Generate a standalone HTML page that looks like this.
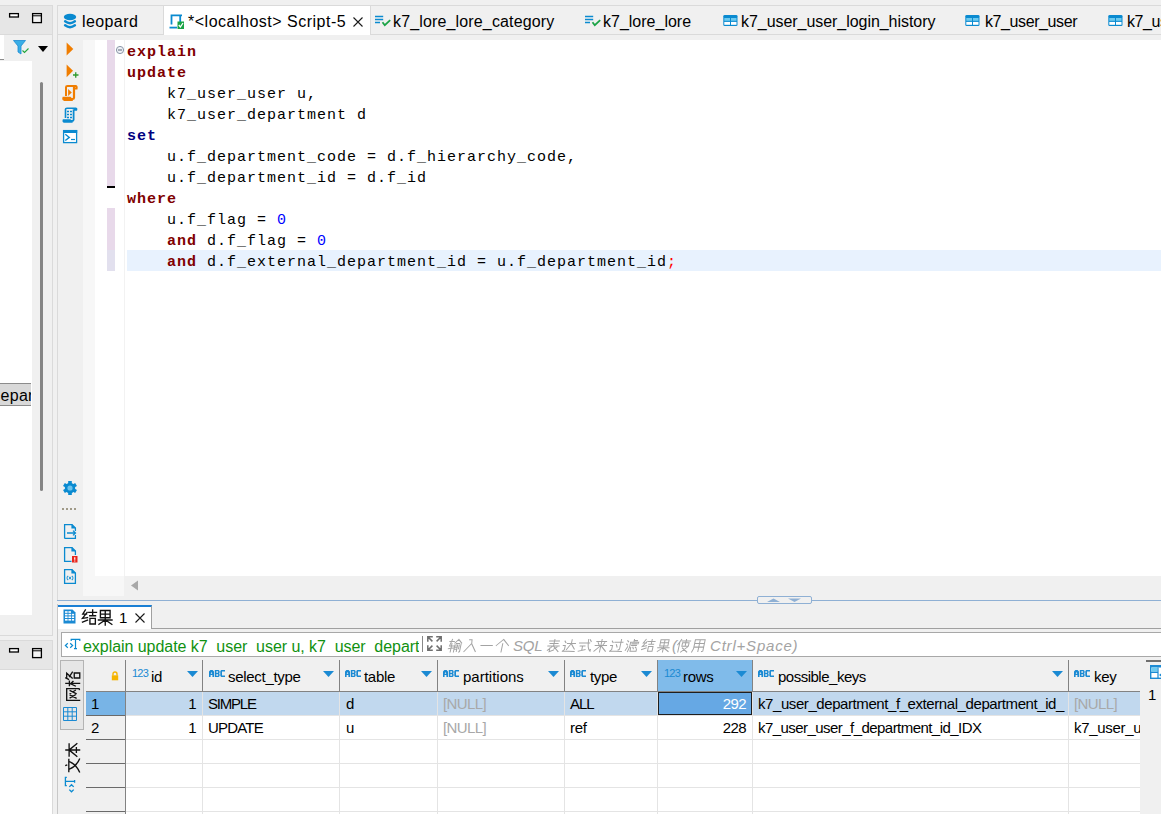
<!DOCTYPE html>
<html><head><meta charset="utf-8">
<style>
*{margin:0;padding:0;box-sizing:border-box}
html,body{width:1161px;height:814px;overflow:hidden;background:#f0f0f0;font-family:"Liberation Sans",sans-serif;position:relative}
.a{position:absolute}
.ui{font-family:"Liberation Sans",sans-serif;font-size:16px;color:#000;white-space:nowrap}
.code{font-family:"Liberation Mono",monospace;font-size:15px;letter-spacing:1px;white-space:pre;color:#000}
.kw{color:#800000;font-weight:bold}
.kn{color:#000080;font-weight:bold}
.num{color:#0000ff}
</style></head><body>

<!-- ===== LEFT PANEL (upper) ===== -->
<div class="a" style="left:0;top:5px;width:53px;height:631px;background:#f0f0f0;border-right:1px solid #dadada;border-top:1px solid #dadada;border-bottom:1px solid #dadada"></div>
<div class="a" style="left:0;top:6px;width:52px;height:29px;background:#e6e6e6;border-bottom:1px solid #dadada"></div>
<!-- min/max icons -->
<svg class="a" style="left:8px;top:12px" width="36" height="13" viewBox="0 0 36 13"><rect x="1.6" y="1.6" width="8.8" height="3.4" fill="#fff" stroke="#000" stroke-width="1.3"/><rect x="24.6" y="1.6" width="8.8" height="9" fill="#f4f4f4" stroke="#000" stroke-width="1.3"/><path d="M24.6 3.8H33.4" stroke="#000" stroke-width="1"/></svg>
<!-- filter row -->
<div class="a" style="left:0;top:35px;width:4px;height:25px;background:#fff;border-bottom:1px solid #8c8c8c"></div>
<!-- tree -->
<div class="a" style="left:0;top:61px;width:32px;height:554px;background:#fff"></div>
<div class="a" style="left:40px;top:82px;width:3px;height:409px;background:#858585;border-radius:2px"></div>

<!-- left panel extras -->
<svg class="a" style="left:13px;top:40px" width="18" height="16" viewBox="0 0 18 16"><path d="M0.5 0.5H12.5L8 6V14L5 12V6Z" fill="#3aaee6" stroke="#1b8ad3" stroke-width="0.8"/><path d="M9.5 10.5L11.5 12.5L15.5 8.5" stroke="#22a63c" stroke-width="1.1" fill="none"/></svg>
<svg class="a" style="left:38px;top:46px" width="10" height="6" viewBox="0 0 10 6"><path d="M0 0H10L5 6Z" fill="#000"/></svg>
<div class="a" style="left:0;top:383px;width:31px;height:23px;background:#d9d9d9;border-top:1px solid #8c8c8c;border-bottom:1px solid #8c8c8c"></div>
<div class="a" style="left:0;top:384px;width:31px;height:21px;overflow:hidden"><div class="a ui" style="left:0.5px;top:2px;font-size:16px;line-height:20px;letter-spacing:0.3px">epar</div></div>
<div class="a" style="left:0;top:615px;width:52px;height:20px;background:#f0f0f0"></div>
<div class="a" style="left:50px;top:670px;width:1px;height:27px;background:#c8c8c8"></div>

<!-- ===== LEFT PANEL (lower) ===== -->
<div class="a" style="left:0;top:640px;width:53px;height:174px;background:#fff;border-right:1px solid #dadada;border-top:1px solid #dadada"></div>
<div class="a" style="left:0;top:641px;width:52px;height:29px;background:#e6e6e6;border-bottom:1px solid #dadada"></div>
<svg class="a" style="left:8px;top:647px" width="36" height="13" viewBox="0 0 36 13"><rect x="1.6" y="1.6" width="8.8" height="3.4" fill="#fff" stroke="#000" stroke-width="1.3"/><rect x="24.6" y="1.6" width="8.8" height="9" fill="#f4f4f4" stroke="#000" stroke-width="1.3"/><path d="M24.6 3.8H33.4" stroke="#000" stroke-width="1"/></svg>

<!-- ===== EDITOR ===== -->
<div class="a" style="left:57px;top:5px;width:1104px;height:30px;background:#f0f0f0;border-top:1px solid #dadada;border-left:1px solid #dadada;border-bottom:1px solid #dadada"></div>
<div class="a" style="left:164px;top:6px;width:207px;height:29px;background:#fff"></div>
<div class="a" style="left:163px;top:6px;width:1px;height:29px;background:#dadada"></div>
<div class="a" style="left:370px;top:6px;width:1px;height:29px;background:#dadada"></div>


<!-- tab icons/text -->
<svg class="a" style="left:63px;top:13px" width="14" height="16" viewBox="0 0 14 16">
 <ellipse cx="7" cy="4" rx="6.2" ry="3.3" fill="#0a8ad0"/>
 <path d="M2.1 8.3 Q7 12 11.9 8.3" stroke="#0a8ad0" stroke-width="2.4" stroke-linecap="round" fill="none"/>
 <path d="M2.1 12.3 Q7 16 11.9 12.3" stroke="#0a8ad0" stroke-width="2.4" stroke-linecap="round" fill="none"/>
</svg>
<div class="a ui" style="left:82px;top:12px;line-height:20px;letter-spacing:0.4px">leopard</div>
<svg class="a" style="left:169px;top:14px" width="16" height="16" viewBox="0 0 16 16">
 <path d="M2.5 10.5 V1.3 H13" stroke="#0a8ad0" stroke-width="1.8" fill="none"/>
 <path d="M11.2 1.3 V9" stroke="#0a8ad0" stroke-width="1.8" fill="none"/>
 <path d="M0.5 13.6 H8" stroke="#0a8ad0" stroke-width="1.8" fill="none"/>
 <rect x="8.5" y="7.5" width="6.5" height="7.5" fill="#1aa346"/>
 <path d="M9.8 11 L11.4 13 L14 9" stroke="#fff" stroke-width="1.3" fill="none"/>
</svg>
<div class="a ui" style="left:188px;top:12px;line-height:20px;letter-spacing:0.5px">*&lt;localhost&gt; Script-5</div>
<svg class="a" style="left:353px;top:17px" width="10" height="10" viewBox="0 0 10 10"><path d="M0.5 0.5 L9.5 9.5 M9.5 0.5 L0.5 9.5" stroke="#1a1a1a" stroke-width="1.1"/></svg>
<svg class="a" style="left:375px;top:15px" width="17" height="12" viewBox="0 0 17 12">
 <path d="M0 1.5H8.2M0 4.5H8.2M0 7.5H5" stroke="#0a8ad0" stroke-width="1.5"/>
 <path d="M7.5 7.2 L9.8 10.2 L15.2 5.2" stroke="#1aa346" stroke-width="1.8" fill="none"/>
</svg>
<div class="a ui" style="left:393px;top:12px;line-height:20px;letter-spacing:0.15px">k7_lore_lore_category</div>
<svg class="a" style="left:585px;top:15px" width="17" height="12" viewBox="0 0 17 12">
 <path d="M0 1.5H8.2M0 4.5H8.2M0 7.5H5" stroke="#0a8ad0" stroke-width="1.5"/>
 <path d="M7.5 7.2 L9.8 10.2 L15.2 5.2" stroke="#1aa346" stroke-width="1.8" fill="none"/>
</svg>
<div class="a ui" style="left:603px;top:12px;line-height:20px">k7_lore_lore</div>
<svg class="a" style="left:723px;top:15px" width="15" height="11" viewBox="0 0 15 11">
 <rect x="0.3" y="0" width="14.2" height="11" rx="1.3" fill="#0a8ad0"/>
 <rect x="1.3" y="3" width="5.7" height="2.8" fill="#6ccaef"/>
 <rect x="8" y="3" width="5.5" height="2.8" fill="#6ccaef"/>
 <rect x="1.3" y="6.9" width="5.7" height="2.9" fill="#fff"/>
 <rect x="8" y="6.9" width="5.5" height="2.9" fill="#fff"/>
</svg>
<div class="a ui" style="left:741px;top:12px;line-height:20px;letter-spacing:-0.05px">k7_user_user_login_history</div>
<svg class="a" style="left:965px;top:15px" width="15" height="11" viewBox="0 0 15 11">
 <rect x="0.3" y="0" width="14.2" height="11" rx="1.3" fill="#0a8ad0"/>
 <rect x="1.3" y="3" width="5.7" height="2.8" fill="#6ccaef"/>
 <rect x="8" y="3" width="5.5" height="2.8" fill="#6ccaef"/>
 <rect x="1.3" y="6.9" width="5.7" height="2.9" fill="#fff"/>
 <rect x="8" y="6.9" width="5.5" height="2.9" fill="#fff"/>
</svg>
<div class="a ui" style="left:985px;top:12px;line-height:20px;letter-spacing:-0.4px">k7_user_user</div>
<svg class="a" style="left:1108px;top:15px" width="15" height="11" viewBox="0 0 15 11">
 <rect x="0.3" y="0" width="14.2" height="11" rx="1.3" fill="#0a8ad0"/>
 <rect x="1.3" y="3" width="5.7" height="2.8" fill="#6ccaef"/>
 <rect x="8" y="3" width="5.5" height="2.8" fill="#6ccaef"/>
 <rect x="1.3" y="6.9" width="5.7" height="2.9" fill="#fff"/>
 <rect x="8" y="6.9" width="5.5" height="2.9" fill="#fff"/>
</svg>
<div class="a ui" style="left:1127px;top:12px;line-height:20px;letter-spacing:-0.4px">k7_user_user</div>

<!-- editor body -->
<div class="a" style="left:57px;top:35px;width:1104px;height:565px;background:#f0f0f0;border-left:1px solid #dadada"></div>
<div class="a" style="left:83px;top:40px;width:12px;height:556px;background:#f7f7f7"></div>
<div class="a" style="left:95px;top:40px;width:1066px;height:536px;background:#fff"></div>
<div class="a" style="left:107px;top:40px;width:8px;height:146px;background:#e8d9ea"></div>
<div class="a" style="left:107px;top:186px;width:8px;height:2px;background:#000"></div>
<div class="a" style="left:107px;top:208px;width:8px;height:42px;background:#e8d9ea"></div>
<div class="a" style="left:107px;top:250px;width:8px;height:21px;background:#e2e0ee"></div>
<div class="a" style="left:124px;top:40px;width:1px;height:536px;background:#f2f2f2"></div>
<div class="a" style="left:127px;top:250px;width:1034px;height:21px;background:#e8f2fe"></div>

<div class="a code" style="left:127px;top:42px;line-height:21px"><span class="kw">explain</span>
<span class="kw">update</span>
    k7_user_user u,
    k7_user_department d
<span class="kn">set</span>
    u.f_department_code = d.f_hierarchy_code,
    u.f_department_id = d.f_id
<span class="kw">where</span>
    u.f_flag = <span class="num">0</span>
    <span class="kw">and</span> d.f_flag = <span class="num">0</span>
    <span class="kw">and</span> d.f_external_department_id = u.f_department_id<span style="color:#f00">;</span></div>


<!-- toolbar icons -->
<svg class="a" style="left:60px;top:38px" width="22" height="22" viewBox="0 0 22 22"><path d="M6.6 4.6 L13.3 11 L6.6 17.4Z" fill="#f07d00"/></svg>
<svg class="a" style="left:60px;top:60px" width="22" height="22" viewBox="0 0 22 22"><path d="M6.6 4.4 L13 10.8 L6.6 17.2Z" fill="#f07d00"/><path d="M13 15H18.5M15.75 12.2V17.8" stroke="#2e9a2e" stroke-width="1.3"/></svg>
<svg class="a" style="left:60px;top:82px" width="22" height="22" viewBox="0 0 22 22">
 <path d="M6 14 V5.2 Q6 4 7.5 4 H15.8 Q17 4.3 16.6 6.5 H14.8" stroke="#f07d00" stroke-width="2" fill="none"/>
 <path d="M14 5 V15.8 Q14 17 12.5 17 L11.2 17 L10 15.8 H3.5 Q3 17.3 4.3 17.8 H12.8" stroke="#f07d00" stroke-width="2.2" fill="none"/>
 <path d="M8.1 7 L11.8 10.5 L8.1 14Z" fill="#f07d00"/>
</svg>
<svg class="a" style="left:60px;top:104px" width="22" height="22" viewBox="0 0 22 22">
 <path d="M5.5 14 V5.2 Q5.5 4.2 7 4.2 H15.8 Q17 4.5 16.4 5.9 H14" stroke="#0a8ad0" stroke-width="1.6" fill="none"/>
 <path d="M13.6 5.2 V15.8 Q13.6 17 12.3 17 L11 17 L10 16.2 H3.5 Q3 17.6 4.3 17.8 H12.6" stroke="#0a8ad0" stroke-width="1.8" fill="none"/>
 <path d="M7 7.5H9M10 7.5H12M7 10.5H9M10 10.5H12M7 13.5H9M10 13.5H12" stroke="#0a8ad0" stroke-width="1.4"/>
</svg>
<svg class="a" style="left:60px;top:126px" width="22" height="22" viewBox="0 0 22 22">
 <rect x="3.6" y="4.6" width="13" height="12" stroke="#0a8ad0" stroke-width="1.3" fill="#fff"/>
 <rect x="3" y="4" width="14.2" height="3" fill="#0a8ad0"/>
 <path d="M5.3 8.2 L9.3 11.4 L5.3 14.5" stroke="#0a8ad0" stroke-width="1.4" fill="none"/>
 <path d="M11 13.5H15" stroke="#0a8ad0" stroke-width="1.2"/>
</svg>
<svg class="a" style="left:62px;top:480px" width="16" height="16" viewBox="0 0 16 16">
 <g fill="#0a8ad0" transform="translate(8 8)">
  <circle r="5.2"/>
  <rect x="-1.8" y="-7" width="3.6" height="14"/>
  <rect x="-1.8" y="-7" width="3.6" height="14" transform="rotate(60)"/>
  <rect x="-1.8" y="-7" width="3.6" height="14" transform="rotate(120)"/>
 </g>
 <circle cx="8" cy="8" r="2.6" fill="#6cc3ec"/>
</svg>
<div class="a" style="left:62px;top:508px;width:16px;height:2px;background:repeating-linear-gradient(90deg,#a09a88 0 2px,transparent 2px 4px)"></div>
<svg class="a" style="left:62px;top:522px" width="16" height="18" viewBox="0 0 16 18">
 <path d="M2.6 16.4 V2.6 H10 L13.4 6 V9 M13.4 13 V16.4 H2.6" stroke="#0a8ad0" stroke-width="1.3" fill="none"/>
 <path d="M10 2.6 V6 H13.4" stroke="#0a8ad0" stroke-width="1.2" fill="#0a8ad0"/>
 <path d="M5 11 H13.5 M11 8.6 L13.5 11 L11 13.4" stroke="#0a8ad0" stroke-width="1.3" fill="none"/>
</svg>
<svg class="a" style="left:62px;top:545px" width="16" height="18" viewBox="0 0 16 18">
 <path d="M9.5 16.4 H2.6 V2.6 H10 L13.4 6 V10" stroke="#0a8ad0" stroke-width="1.3" fill="none"/>
 <path d="M10 2.6 V6 H13.4" stroke="#0a8ad0" stroke-width="1.2" fill="#0a8ad0"/>
 <rect x="10" y="11" width="5.5" height="6.5" fill="#e8261b"/>
 <path d="M12.75 12.2V14.8M12.75 15.6V16.6" stroke="#fff" stroke-width="1.2"/>
</svg>
<svg class="a" style="left:62px;top:567px" width="16" height="18" viewBox="0 0 16 18">
 <path d="M2.6 16.4 V2.6 H10 L13.4 6 V16.4 Z" stroke="#0a8ad0" stroke-width="1.3" fill="none"/>
 <path d="M10 2.6 V6 H13.4" stroke="#0a8ad0" stroke-width="1.2" fill="#0a8ad0"/>
 <path d="M5.6 8.8 Q4.4 11 5.6 13.2 M10.4 8.8 Q11.6 11 10.4 13.2 M6.8 9.5 L9.2 12.5 M9.2 9.5 L6.8 12.5" stroke="#0a8ad0" stroke-width="0.9" fill="none"/>
</svg>
<!-- fold icon -->
<svg class="a" style="left:115px;top:45px" width="10" height="10" viewBox="0 0 10 10"><circle cx="5" cy="5" r="3.6" fill="#eef1f6" stroke="#8a96a8" stroke-width="1"/><path d="M3 5H7" stroke="#5a6678" stroke-width="1"/></svg>

<!-- h scrollbar -->
<div class="a" style="left:95px;top:576px;width:29px;height:20px;background:#f7f7f7"></div>
<div class="a" style="left:124px;top:576px;width:1037px;height:20px;background:#f0f0f0"></div>

<!-- sash -->
<div class="a" style="left:57px;top:600px;width:1104px;height:1px;background:#8fb0d4"></div>

<!-- ===== RESULTS ===== -->
<div class="a" style="left:57px;top:604px;width:1104px;height:210px;background:#f0f0f0"></div>
<div class="a" style="left:58px;top:605px;width:94px;height:24px;background:#fff;border-top:2px solid #1a7fd4;border-right:1px solid #a0a0a0"></div>
<div class="a" style="left:152px;top:628px;width:1009px;height:1px;background:#a0a0a0"></div>
<div class="a" style="left:61px;top:632px;width:1100px;height:25px;background:#fff;border:1px solid #a8a8a8;border-right:none"></div>

<!-- results tab content -->
<svg class="a" style="left:63px;top:609px" width="13" height="15" viewBox="0 0 13 15">
 <path d="M0.5 0.5H9.5L12.5 3.5V14.5H0.5Z" fill="#1b8ad3"/>
 <g fill="#fff"><rect x="2" y="2.2" width="2.6" height="1.6"/><rect x="5.4" y="2.2" width="2.6" height="1.6"/>
 <rect x="2" y="4.8" width="2.6" height="1.6"/><rect x="5.4" y="4.8" width="2.6" height="1.6"/><rect x="8.8" y="4.8" width="2.3" height="1.6"/>
 <rect x="2" y="7.4" width="2.6" height="1.6"/><rect x="5.4" y="7.4" width="2.6" height="1.6"/><rect x="8.8" y="7.4" width="2.3" height="1.6"/>
 <rect x="2" y="10" width="2.6" height="1.6"/><rect x="5.4" y="10" width="2.6" height="1.6"/><rect x="8.8" y="10" width="2.3" height="1.6"/>
 </g>
</svg>

<div class="a ui" style="left:119px;top:609px;font-size:15px;line-height:18px">1</div>
<svg class="a" style="left:135px;top:613px" width="10" height="10" viewBox="0 0 10 10"><path d="M0.5 0.5 L9.5 9.5 M9.5 0.5 L0.5 9.5" stroke="#1a1a1a" stroke-width="1.1"/></svg>
<!-- filter bar content -->
<svg class="a" style="left:64px;top:638px" width="18" height="13" viewBox="0 0 18 13"><path d="M3.8 5.3L1.4 7.5L3.8 9.7 M6.2 5.3L8.6 7.5L6.2 9.7 M7.2 3V1.3H15.8V3 M11.5 1.3V10.7 M10 10.7H13" stroke="#0a8ad0" stroke-width="1.2" fill="none"/></svg>
<div class="a" style="left:83px;top:636px;width:336px;height:20px;overflow:hidden"><div class="a ui" style="left:0;top:1px;font-size:16px;line-height:20px;color:#119111;letter-spacing:-0.05px">explain update k7&nbsp; user&nbsp; user u, k7&nbsp; user&nbsp; department d</div></div>
<div class="a" style="left:422px;top:636px;width:1px;height:16px;background:#888"></div>
<svg class="a" style="left:426px;top:635px" width="17" height="17" viewBox="0 0 17 17"><path d="M1.8 6.8V1.8H6.8 M1.8 1.8L6.4 6.4 M15.2 6.8V1.8H10.2 M15.2 1.8L10.6 6.4 M1.8 10.2V15.2H6.8 M1.8 15.2L6.4 10.6 M15.2 10.2V15.2H10.2 M15.2 15.2L10.6 10.6" stroke="#6e6e6e" stroke-width="1.5" fill="none"/></svg>
<div class="a" style="left:513px;top:636px;font:italic 15px/20px 'Liberation Sans',sans-serif;color:#a3a3a3;letter-spacing:-0.2px">SQL</div>
<div class="a" style="left:672px;top:636px;font:italic 15px/20px 'Liberation Sans',sans-serif;color:#a3a3a3">(</div>
<div class="a" style="left:710px;top:636px;font:italic 15px/20px 'Liberation Sans',sans-serif;color:#a3a3a3;letter-spacing:0.8px">Ctrl+Space)</div>
<!-- scrollbar arrow + sash handle -->
<svg class="a" style="left:130px;top:580px" width="9" height="11" viewBox="0 0 9 11"><path d="M8 0.5V10.5L1 5.5Z" fill="#a8a8a8"/></svg>
<div class="a" style="left:757px;top:596px;width:55px;height:8px;background:#f0f0f0;border:1px solid #8fb0d4;border-radius:2px"></div>
<svg class="a" style="left:766px;top:597px" width="36" height="6" viewBox="0 0 36 6"><path d="M1 5H14L7.5 1.5Z M22 1.5H35L28.5 5Z" fill="#8fb0d4"/></svg>
<!-- grid -->
<div class="a" style="left:57px;top:604px;width:1px;height:210px;background:#c8c8c8"></div>
<div class="a" style="left:86px;top:660px;width:1054px;height:154px;background:#fff"></div>
<div class="a" style="left:86px;top:660px;width:1054px;height:32px;background:#f0f0f0;border-bottom:1px solid #828282"></div>
<div class="a" style="left:657px;top:660px;width:95px;height:31px;background:#80bbea"></div>
<!-- row 1 selection -->
<div class="a" style="left:86px;top:692px;width:39px;height:23px;background:#78b4e6"></div>
<div class="a" style="left:126px;top:692px;width:1014px;height:23px;background:#c1d8ee"></div>
<div class="a" style="left:86px;top:715px;width:39px;height:99px;background:#f0f0f0"></div>
<div class="a" style="left:658px;top:692px;width:94px;height:23px;background:#66a8e4;border:1.5px solid #1e1e1e"></div>
<div class="a" style="left:125px;top:660px;width:1px;height:31px;background:#828282"></div>
<div class="a" style="left:202px;top:660px;width:1px;height:31px;background:#828282"></div>
<div class="a" style="left:339px;top:660px;width:1px;height:31px;background:#828282"></div>
<div class="a" style="left:437px;top:660px;width:1px;height:31px;background:#828282"></div>
<div class="a" style="left:564px;top:660px;width:1px;height:31px;background:#828282"></div>
<div class="a" style="left:657px;top:660px;width:1px;height:31px;background:#828282"></div>
<div class="a" style="left:752px;top:660px;width:1px;height:31px;background:#828282"></div>
<div class="a" style="left:1068px;top:660px;width:1px;height:31px;background:#828282"></div>
<div class="a" style="left:202px;top:692px;width:1px;height:122px;background:#e4e4e4"></div>
<div class="a" style="left:339px;top:692px;width:1px;height:122px;background:#e4e4e4"></div>
<div class="a" style="left:437px;top:692px;width:1px;height:122px;background:#e4e4e4"></div>
<div class="a" style="left:564px;top:692px;width:1px;height:122px;background:#e4e4e4"></div>
<div class="a" style="left:657px;top:692px;width:1px;height:122px;background:#e4e4e4"></div>
<div class="a" style="left:752px;top:692px;width:1px;height:122px;background:#e4e4e4"></div>
<div class="a" style="left:1068px;top:692px;width:1px;height:122px;background:#e4e4e4"></div>
<div class="a" style="left:125px;top:692px;width:1px;height:122px;background:#828282"></div>
<div class="a" style="left:126px;top:715px;width:1014px;height:1px;background:#e4e4e4"></div>
<div class="a" style="left:126px;top:739px;width:1014px;height:1px;background:#e4e4e4"></div>
<div class="a" style="left:126px;top:763px;width:1014px;height:1px;background:#e4e4e4"></div>
<div class="a" style="left:126px;top:787px;width:1014px;height:1px;background:#e4e4e4"></div>
<div class="a" style="left:126px;top:811px;width:1014px;height:1px;background:#e4e4e4"></div>
<div class="a" style="left:86px;top:715px;width:39px;height:1px;background:#6a6a6a"></div>
<div class="a" style="left:86px;top:739px;width:39px;height:1px;background:#6a6a6a"></div>
<div class="a" style="left:86px;top:763px;width:39px;height:1px;background:#6a6a6a"></div>
<div class="a" style="left:86px;top:787px;width:39px;height:1px;background:#6a6a6a"></div>
<div class="a" style="left:86px;top:811px;width:39px;height:1px;background:#6a6a6a"></div>
<svg class="a" style="left:111px;top:671px" width="8" height="10" viewBox="0 0 8 10"><path d="M2 4.5V3Q2 1 4 1Q6 1 6 3V4.5" stroke="#f5b400" stroke-width="1.4" fill="none"/><rect x="0.8" y="4.3" width="6.4" height="5" fill="#f5b400"/></svg>
<div class="a" style="left:132px;top:668px;font:11px/11px 'Liberation Sans',sans-serif;color:#1b8ad3;letter-spacing:-0.75px">123</div>
<div class="a ui" style="left:151px;top:668px;font-size:15px;line-height:18px;letter-spacing:-0.3px">id</div>
<svg class="a" style="left:187px;top:671px" width="11" height="6" viewBox="0 0 11 6"><path d="M0 0H11L5.5 6Z" fill="#1b8ad3"/></svg>
<svg class="a" style="left:209px;top:670px" width="16" height="7" viewBox="0 0 16 7"><path fill="#1b8ad3" fill-rule="evenodd" d="M0 7V1.6L1.4 0H3.6L5 1.6V7H3.4V5H1.6V7Z M1.7 3.7L2.5 1.9L3.3 3.7Z M5.8 0H9.6L10.6 1V2.8L10.1 3.5L10.6 4.2V6L9.6 7H5.8Z M7.3 1.3V2.8H9.1V1.3Z M7.3 4.2V5.7H9.1V4.2Z M12.3 0H16V1.6H13V5.4H16V7H12.3L11.3 6V1Z"/></svg>
<div class="a ui" style="left:228px;top:668px;font-size:15px;line-height:18px;letter-spacing:-0.3px">select_type</div>
<svg class="a" style="left:323px;top:671px" width="11" height="6" viewBox="0 0 11 6"><path d="M0 0H11L5.5 6Z" fill="#1b8ad3"/></svg>
<svg class="a" style="left:345px;top:670px" width="16" height="7" viewBox="0 0 16 7"><path fill="#1b8ad3" fill-rule="evenodd" d="M0 7V1.6L1.4 0H3.6L5 1.6V7H3.4V5H1.6V7Z M1.7 3.7L2.5 1.9L3.3 3.7Z M5.8 0H9.6L10.6 1V2.8L10.1 3.5L10.6 4.2V6L9.6 7H5.8Z M7.3 1.3V2.8H9.1V1.3Z M7.3 4.2V5.7H9.1V4.2Z M12.3 0H16V1.6H13V5.4H16V7H12.3L11.3 6V1Z"/></svg>
<div class="a ui" style="left:364px;top:668px;font-size:15px;line-height:18px;letter-spacing:-0.3px">table</div>
<svg class="a" style="left:421px;top:671px" width="11" height="6" viewBox="0 0 11 6"><path d="M0 0H11L5.5 6Z" fill="#1b8ad3"/></svg>
<svg class="a" style="left:443px;top:670px" width="16" height="7" viewBox="0 0 16 7"><path fill="#1b8ad3" fill-rule="evenodd" d="M0 7V1.6L1.4 0H3.6L5 1.6V7H3.4V5H1.6V7Z M1.7 3.7L2.5 1.9L3.3 3.7Z M5.8 0H9.6L10.6 1V2.8L10.1 3.5L10.6 4.2V6L9.6 7H5.8Z M7.3 1.3V2.8H9.1V1.3Z M7.3 4.2V5.7H9.1V4.2Z M12.3 0H16V1.6H13V5.4H16V7H12.3L11.3 6V1Z"/></svg>
<div class="a ui" style="left:463px;top:668px;font-size:15px;line-height:18px;letter-spacing:0px">partitions</div>
<svg class="a" style="left:548px;top:671px" width="11" height="6" viewBox="0 0 11 6"><path d="M0 0H11L5.5 6Z" fill="#1b8ad3"/></svg>
<svg class="a" style="left:570px;top:670px" width="16" height="7" viewBox="0 0 16 7"><path fill="#1b8ad3" fill-rule="evenodd" d="M0 7V1.6L1.4 0H3.6L5 1.6V7H3.4V5H1.6V7Z M1.7 3.7L2.5 1.9L3.3 3.7Z M5.8 0H9.6L10.6 1V2.8L10.1 3.5L10.6 4.2V6L9.6 7H5.8Z M7.3 1.3V2.8H9.1V1.3Z M7.3 4.2V5.7H9.1V4.2Z M12.3 0H16V1.6H13V5.4H16V7H12.3L11.3 6V1Z"/></svg>
<div class="a ui" style="left:590px;top:668px;font-size:15px;line-height:18px;letter-spacing:-0.3px">type</div>
<svg class="a" style="left:641px;top:671px" width="11" height="6" viewBox="0 0 11 6"><path d="M0 0H11L5.5 6Z" fill="#1b8ad3"/></svg>
<div class="a" style="left:664px;top:668px;font:11px/11px 'Liberation Sans',sans-serif;color:#1b8ad3;letter-spacing:-0.75px">123</div>
<div class="a ui" style="left:683px;top:668px;font-size:15px;line-height:18px;letter-spacing:-0.3px">rows</div>
<svg class="a" style="left:736px;top:671px" width="11" height="6" viewBox="0 0 11 6"><path d="M0 0H11L5.5 6Z" fill="#1b8ad3"/></svg>
<svg class="a" style="left:758px;top:670px" width="16" height="7" viewBox="0 0 16 7"><path fill="#1b8ad3" fill-rule="evenodd" d="M0 7V1.6L1.4 0H3.6L5 1.6V7H3.4V5H1.6V7Z M1.7 3.7L2.5 1.9L3.3 3.7Z M5.8 0H9.6L10.6 1V2.8L10.1 3.5L10.6 4.2V6L9.6 7H5.8Z M7.3 1.3V2.8H9.1V1.3Z M7.3 4.2V5.7H9.1V4.2Z M12.3 0H16V1.6H13V5.4H16V7H12.3L11.3 6V1Z"/></svg>
<div class="a ui" style="left:778px;top:668px;font-size:15px;line-height:18px;letter-spacing:-0.5px">possible_keys</div>
<svg class="a" style="left:1052px;top:671px" width="11" height="6" viewBox="0 0 11 6"><path d="M0 0H11L5.5 6Z" fill="#1b8ad3"/></svg>
<svg class="a" style="left:1074px;top:670px" width="16" height="7" viewBox="0 0 16 7"><path fill="#1b8ad3" fill-rule="evenodd" d="M0 7V1.6L1.4 0H3.6L5 1.6V7H3.4V5H1.6V7Z M1.7 3.7L2.5 1.9L3.3 3.7Z M5.8 0H9.6L10.6 1V2.8L10.1 3.5L10.6 4.2V6L9.6 7H5.8Z M7.3 1.3V2.8H9.1V1.3Z M7.3 4.2V5.7H9.1V4.2Z M12.3 0H16V1.6H13V5.4H16V7H12.3L11.3 6V1Z"/></svg>
<div class="a ui" style="left:1094px;top:668px;font-size:15px;line-height:18px;letter-spacing:-0.3px">key</div>
<div class="a ui" style="left:91px;top:695px;font-size:15px;line-height:18px;letter-spacing:-0.6px;color:#000">1</div>
<div class="a ui" style="left:91px;top:719px;font-size:15px;line-height:18px;letter-spacing:-0.6px;color:#000">2</div>
<div class="a ui" style="right:965px;top:695px;font-size:15px;line-height:18px;letter-spacing:-0.6px;color:#000;text-align:right">1</div>
<div class="a ui" style="right:965px;top:719px;font-size:15px;line-height:18px;letter-spacing:-0.6px;color:#000;text-align:right">1</div>
<div class="a ui" style="left:208px;top:695px;font-size:15px;line-height:18px;letter-spacing:-1.2px;color:#000">SIMPLE</div>
<div class="a ui" style="left:208px;top:719px;font-size:15px;line-height:18px;letter-spacing:-0.8px;color:#000">UPDATE</div>
<div class="a ui" style="left:346px;top:695px;font-size:15px;line-height:18px;letter-spacing:-0.6px;color:#000">d</div>
<div class="a ui" style="left:346px;top:719px;font-size:15px;line-height:18px;letter-spacing:-0.6px;color:#000">u</div>
<div class="a ui" style="left:443px;top:695px;font-size:15px;line-height:18px;letter-spacing:-0.6px;color:#a8a8a8">[NULL]</div>
<div class="a ui" style="left:443px;top:719px;font-size:15px;line-height:18px;letter-spacing:-0.6px;color:#a8a8a8">[NULL]</div>
<div class="a ui" style="left:570px;top:695px;font-size:15px;line-height:18px;letter-spacing:-1.1px;color:#000">ALL</div>
<div class="a ui" style="left:570px;top:719px;font-size:15px;line-height:18px;letter-spacing:-0.3px;color:#000">ref</div>
<div class="a ui" style="right:415px;top:695px;font-size:15px;line-height:18px;letter-spacing:-0.6px;color:#fff;text-align:right">292</div>
<div class="a ui" style="right:415px;top:719px;font-size:15px;line-height:18px;letter-spacing:-0.6px;color:#000;text-align:right">228</div>
<div class="a" style="left:753px;top:692px;width:315px;height:23px;overflow:hidden"><div class="a ui" style="left:5px;top:3px;font-size:15px;line-height:18px;letter-spacing:-0.42px;color:#000">k7_user_department_f_external_department_id_</div></div>
<div class="a ui" style="left:758px;top:719px;font-size:15px;line-height:18px;letter-spacing:-0.55px;color:#000">k7_user_user_f_department_id_IDX</div>
<div class="a" style="left:1074px;top:692px;width:66px;height:23px;overflow:hidden"><div class="a ui" style="left:0;top:3px;font-size:15px;line-height:18px;letter-spacing:-0.6px;color:#a8a8a8">[NULL]</div></div>
<div class="a" style="left:1074px;top:716px;width:66px;height:23px;overflow:hidden"><div class="a ui" style="left:0;top:3px;font-size:15px;line-height:18px;letter-spacing:-0.3px">k7_user_user</div></div>
<div class="a" style="left:1146px;top:660px;width:15px;height:2px;background:#6e6e6e"></div>
<svg class="a" style="left:1150px;top:665px" width="11" height="14" viewBox="0 0 11 14"><rect x="0.7" y="0.7" width="12" height="12.6" stroke="#1b8ad3" stroke-width="1.4" fill="#fff"/><rect x="0" y="0" width="13" height="2.5" fill="#1b8ad3"/><rect x="1.4" y="2.5" width="6" height="4.2" fill="#6ccaef"/><path d="M0 7.4H8M8 2.5V14" stroke="#1b8ad3" stroke-width="1.2"/><path d="M9 10L11 8.5V11.5Z" fill="#1b8ad3"/></svg>
<div class="a ui" style="left:1148px;top:686px;font-size:15px;line-height:18px;letter-spacing:-0.6px;color:#000">1</div>
<div class="a" style="left:60px;top:660px;width:24px;height:70px;background:#e6e6e6;border:1px solid #b4b4b4"></div>
<svg class="a" style="left:63px;top:707px" width="14" height="14" viewBox="0 0 14 14"><path d="M0.5 0.5H13.5V13.5H0.5Z M0.5 4.8H13.5M0.5 9.2H13.5M4.8 0.5V13.5M9.2 0.5V13.5" stroke="#1b8ad3" stroke-width="1" fill="none"/></svg>
<svg class="a" style="left:58px;top:770px" width="28" height="28" viewBox="0 0 28 28"><path d="M8.8 7.4H7.4V15.6H8.8 M7.4 11.3H16.6 M16.6 9.9V12.7 M11.3 16.9L13.5 14.7L15.7 16.9 M11.3 19.6L13.5 21.8L15.7 19.6" stroke="#0a8ad0" stroke-width="1.3" fill="none"/></svg>
<svg class="a" style="left:0;top:0" width="1161" height="814" viewBox="0 0 1161 814">
<g transform="translate(81.50 609.50) scale(0.9688) skewX(0)"><path d="M4 0.5L1.3 4.8H5.2 M5.8 3L1 9.2L6.2 8.4 M1 13L6.2 11 M7.5 3H15.5 M11.5 0.5V6.5 M8.5 6.5H14.5 M8.7 9.2H14.3V15H8.7Z" stroke="#111" stroke-width="1.394" fill="none" stroke-linecap="square"/></g><g transform="translate(97.50 609.50) scale(0.9688) skewX(0)"><path d="M3 1H13V8.5H3Z M3 4.75H13 M8 1V16 M1 10.8H15 M7.6 11L1.5 15.3 M8.4 11L14.8 15.3" stroke="#111" stroke-width="1.394" fill="none" stroke-linecap="square"/></g>
<g transform="translate(72.5 679) rotate(-90) translate(-7.75 -7.75) scale(0.9688)"><path d="M0.5 4.8H6.5 M3.5 0.5V16 M3.4 5.2L0.5 11.5 M3.8 6.8L6 9 M9.5 0.5L7.3 4.5 M8.8 2H14L8.5 8.2 M10 4.5L15.5 8.2 M9 9.8H14.2V15.5H9Z" stroke="#111" stroke-width="1.379" fill="none"/></g><g transform="translate(72.5 694.5) rotate(-90) translate(-7.75 -7.75) scale(0.9688)"><path d="M2 16V2H14V14.8L12.5 15.3 M4.2 5L8 11.5 M7.6 5L4 12.3 M8.8 5L12.6 11.5 M12.2 5L8.6 12.3" stroke="#111" stroke-width="1.379" fill="none"/></g>
<g transform="translate(72.5 750) rotate(-90) translate(-7.75 -7.75) scale(0.9688)"><path d="M1 4.5H15 M8 0.5V16 M7.6 5L1 13 M8.4 5L15 13 M4.8 12H11.2" stroke="#111" stroke-width="1.379" fill="none"/></g><g transform="translate(72.5 765.5) rotate(-90) translate(-7.75 -7.75) scale(0.9688)"><path d="M7.8 0.5L8.6 2.6 M1 4.2H15 M4.2 4.8Q7 12 15.3 15.5 M12 4.8Q9 12 0.8 15.5" stroke="#111" stroke-width="1.379" fill="none"/></g>
<g transform="translate(450.00 639.00) scale(0.8125) skewX(-12)"><path d="M0.5 3H6 M3.2 0.5L1.2 8.5H6.2 M3.6 5.5V16 M0.5 12L6.5 11 M11 0.5L7 5 M11 0.5L15.5 5 M9 5.5H13 M7.6 16V7.5H11V15.5 M7.6 10H11 M7.6 12.5H11 M13 7.5V12 M15 6.5V15.5L14 16" stroke="#a3a3a3" stroke-width="1.231" fill="none" stroke-linecap="square"/></g><g transform="translate(465.75 639.00) scale(0.8125) skewX(-12)"><path d="M5 1H8L8.6 6L15 15.5 M8 6L1 15.5" stroke="#a3a3a3" stroke-width="1.231" fill="none" stroke-linecap="square"/></g><g transform="translate(481.50 639.00) scale(0.8125) skewX(-12)"><path d="M1 8H15" stroke="#a3a3a3" stroke-width="1.231" fill="none" stroke-linecap="square"/></g><g transform="translate(497.25 639.00) scale(0.8125) skewX(-12)"><path d="M8 0.5L0.5 8 M8 0.5L15.5 8 M8 6V16" stroke="#a3a3a3" stroke-width="1.231" fill="none" stroke-linecap="square"/></g>
<g transform="translate(548.50 639.00) scale(0.8125) skewX(-12)"><path d="M2 2.5H14 M3 5.5H13 M1 8.5H15 M8 0.5V8.5 M7 8.8L1.5 14 M4 11V15.6L9 13.5 M8.2 9L15 15.5 M12.5 10L9.5 12" stroke="#a3a3a3" stroke-width="1.231" fill="none" stroke-linecap="square"/></g><g transform="translate(564.25 639.00) scale(0.8125) skewX(-12)"><path d="M1.5 2.5L3 4.5 M0.5 8H3V13L0.8 15 M1.2 14.8L15.5 15.5 M5 5.5H15 M10 1V5.5L5.5 13 M10.5 6.5L15 12.5" stroke="#a3a3a3" stroke-width="1.231" fill="none" stroke-linecap="square"/></g><g transform="translate(580.00 639.00) scale(0.8125) skewX(-12)"><path d="M0.5 5H13 M10.8 0.5Q11 11 15.5 15V13 M13 1L14.5 3 M2 8.5H8 M5 8.5V14 M1 15L9 13" stroke="#a3a3a3" stroke-width="1.231" fill="none" stroke-linecap="square"/></g><g transform="translate(595.75 639.00) scale(0.8125) skewX(-12)"><path d="M2 3H14 M1 8H15 M8 0.5V16 M4 4.5L5.5 7 M12 4.5L10.5 7 M7.5 8.5L1 15 M8.5 8.5L15 15" stroke="#a3a3a3" stroke-width="1.231" fill="none" stroke-linecap="square"/></g><g transform="translate(611.50 639.00) scale(0.8125) skewX(-12)"><path d="M1.5 2.5L3 4.5 M0.5 8H3V13L0.8 15 M1.2 14.8L15.5 15.5 M5 4H15 M12.5 0.5V12.5L11 13.5 M7.5 7L9 10" stroke="#a3a3a3" stroke-width="1.231" fill="none" stroke-linecap="square"/></g><g transform="translate(627.25 639.00) scale(0.8125) skewX(-12)"><path d="M1 2L2.5 3.5 M0.5 6L2 7.5 M0.5 14L2.5 9.5 M9 0.5V3 M9 2H13 M5 4H15L14.5 6 M5 4V10L3.5 15.5 M7 6H13 M7 8H13 M6.5 10.5V15H14V13 M9 10L10 12 M12 10L13.5 11.5" stroke="#a3a3a3" stroke-width="1.231" fill="none" stroke-linecap="square"/></g><g transform="translate(643.00 639.00) scale(0.8125) skewX(-12)"><path d="M4 0.5L1.3 4.8H5.2 M5.8 3L1 9.2L6.2 8.4 M1 13L6.2 11 M7.5 3H15.5 M11.5 0.5V6.5 M8.5 6.5H14.5 M8.7 9.2H14.3V15H8.7Z" stroke="#a3a3a3" stroke-width="1.231" fill="none" stroke-linecap="square"/></g><g transform="translate(658.75 639.00) scale(0.8125) skewX(-12)"><path d="M3 1H13V8.5H3Z M3 4.75H13 M8 1V16 M1 10.8H15 M7.6 11L1.5 15.3 M8.4 11L14.8 15.3" stroke="#a3a3a3" stroke-width="1.231" fill="none" stroke-linecap="square"/></g>
<g transform="translate(678.50 639.00) scale(0.8125) skewX(-12)"><path d="M4 0.5L0.5 7 M2.5 4.5V16 M5 2.5H15.5 M10 0.5V9 M6 4.5H14V9H6Z M7 11L13.5 16 M13 10L6 16" stroke="#a3a3a3" stroke-width="1.231" fill="none" stroke-linecap="square"/></g><g transform="translate(694.00 639.00) scale(0.8125) skewX(-12)"><path d="M2 1V12L0.5 16 M2 1H14V15L12.5 15.5 M2 5.5H14 M2 10H14 M8 1V15.5" stroke="#a3a3a3" stroke-width="1.231" fill="none" stroke-linecap="square"/></g>
</svg>
</body></html>
